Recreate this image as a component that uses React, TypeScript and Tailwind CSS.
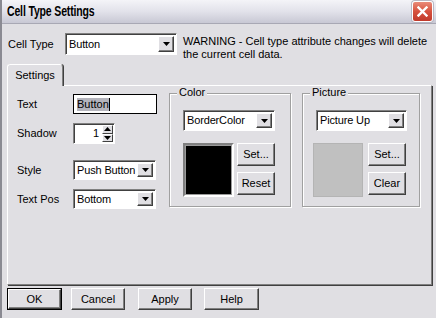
import React from 'react';

function Arrow({ up = false }: { up?: boolean }) {
  return (
    <svg width="7" height="4" viewBox="0 0 7 4" className="block">
      <polygon points={up ? '0,4 7,4 3.5,0' : '0,0 7,0 3.5,4'} fill="#000" />
    </svg>
  );
}

function DropBtn() {
  return (
    <div className="w-[16px] self-stretch flex items-center justify-center bg-[#e0dfe3] border border-t-white border-l-white border-b-[#404040] border-r-[#404040] shadow-[inset_-1px_-1px_0_#808080]">
      <Arrow />
    </div>
  );
}

function Combo({ value, className }: { value: string; className: string }) {
  return (
    <div className={`flex bg-white p-[2px] border border-t-[#808080] border-l-[#808080] border-b-white border-r-white shadow-[inset_1px_1px_0_#404040] ${className}`}>
      <span className="flex-1 pl-[1px] flex items-center whitespace-nowrap overflow-hidden tracking-[-0.15px]">{value}</span>
      <DropBtn />
    </div>
  );
}

function Btn({ label, className, def = false }: { label: string; className: string; def?: boolean }) {
  return (
    <div className={`${def ? 'border border-black' : ''} ${className}`}>
      <div className="w-full h-full flex items-center justify-center bg-[#e0dfe3] border border-t-white border-l-white border-b-[#404040] border-r-[#404040] shadow-[inset_-1px_-1px_0_#808080]">
        {label}
      </div>
    </div>
  );
}

function CloseBtn() {
  return (
    <div className="w-[21px] h-[21px] rounded-[3px] border border-white bg-gradient-to-b from-[#e98a78] via-[#d6513e] to-[#c0392b] flex items-center justify-center shadow-[0_0_0_1px_#b8b8c4]">
      <svg width="11" height="11" viewBox="0 0 11 11">
        <path d="M1.5 1.5 L9.5 9.5 M9.5 1.5 L1.5 9.5" stroke="#fff" strokeWidth="2.4" strokeLinecap="square" />
      </svg>
    </div>
  );
}

function Group({ title, className, children }: { title: string; className: string; children: React.ReactNode }) {
  return (
    <div className={`relative border border-[#a0a0a0] shadow-[1px_1px_0_#fff,inset_1px_1px_0_#fff] ${className}`}>
      <span className="absolute left-[7px] -top-[8px] px-[2px] bg-[#e0dfe3] leading-[13px]">{title}</span>
      {children}
    </div>
  );
}

export default function App() {
  return (
    <div className="w-[436px] h-[318px] overflow-hidden bg-[#e0dfe3] text-[11px] leading-[13px] text-black font-['Liberation_Sans',Arial,sans-serif] flex flex-col border-l-2 border-[#8a8a92]">
      {/* title bar */}
      <div className="h-[24px] shrink-0 flex items-center justify-between bg-gradient-to-b from-[#f4f4f8] via-[#e2e2ea] to-[#c8c8d4] border-b border-[#a8a8b4] pl-[5px] pr-[3px]">
        <span className="inline-block origin-left scale-x-[0.75] font-bold text-[14px] tracking-[-0.2px] whitespace-nowrap">Cell Type Settings</span>
        <CloseBtn />
      </div>

      {/* cell type row */}
      <div className="h-[40px] shrink-0 flex items-start pl-[6px] pt-[9px]">
        <span className="w-[57px] pt-[5px]">Cell Type</span>
        <Combo value="Button" className="w-[112px] h-[22px]" />
        <p className="ml-[6px] pt-[2px] w-[250px]">
          WARNING - Cell type attribute changes will delete the current cell data.
        </p>
      </div>

      {/* tab */}
      <div className="pl-[5px] shrink-0 flex">
        <div className="relative z-10 -mb-px w-[56px] h-[22px] flex items-center justify-center bg-[#e0dfe3] border border-b-0 border-t-white border-l-white border-r-[#808080] rounded-t-[3px] shadow-[1px_0_0_#404040]">
          Settings
        </div>
      </div>

      {/* tab panel */}
      <div className="ml-[5px] w-[425px] h-[200px] shrink-0 flex pt-[8px] pl-[9px] border border-t-white border-l-white border-r-[#808080] border-b-[#808080] shadow-[1px_1px_0_#404040]">
        {/* left fields */}
        <div className="w-[140px] flex flex-col">
          <div className="flex items-center h-[20px]">
            <span className="w-[56px]">Text</span>
            <div className="w-[84px] h-[20px] bg-white border border-black flex items-center pl-[3px]">
              <span className="bg-[#b4b4bc]">Button</span>
              <span className="w-px h-[13px] bg-black" />
            </div>
          </div>
          <div className="flex items-center h-[21px] mt-[9px]">
            <span className="w-[56px]">Shadow</span>
            <div className="w-[42px] h-[21px] flex bg-white border border-t-[#808080] border-l-[#808080] border-b-white border-r-white shadow-[inset_1px_1px_0_#404040]">
              <span className="flex-1 flex items-center justify-end pr-[3px]">1</span>
              <div className="w-[12px] flex flex-col py-[1px] pr-[1px]">
                <div className="flex-1 flex items-center justify-center bg-[#e0dfe3] border border-t-white border-l-white border-b-[#404040] border-r-[#404040]">
                  <Arrow up />
                </div>
                <div className="flex-1 flex items-center justify-center bg-[#e0dfe3] border border-t-white border-l-white border-b-[#404040] border-r-[#404040]">
                  <Arrow />
                </div>
              </div>
            </div>
          </div>
          <div className="flex items-center h-[20px] mt-[16px]">
            <span className="w-[56px]">Style</span>
            <Combo value="Push Button" className="w-[83px] h-[20px]" />
          </div>
          <div className="flex items-center h-[20px] mt-[9px]">
            <span className="w-[56px]">Text Pos</span>
            <Combo value="Bottom" className="w-[83px] h-[20px]" />
          </div>
        </div>

        {/* color group */}
        <Group title="Color" className="ml-[12px] -mt-[1px] w-[122px] h-[114px] pl-[13px] pt-[16px]">
          <Combo value="BorderColor" className="w-[92px] h-[21px]" />
          <div className="flex mt-[12px]">
            <div className="w-[51px] h-[54px] border-2 border-t-[#808080] border-l-[#808080] border-b-white border-r-white">
              <div className="w-full h-full bg-black border border-[#9a9a9a]" />
            </div>
            <div className="ml-[3px] flex flex-col gap-[6px]">
              <Btn label="Set..." className="w-[38px] h-[23px]" />
              <Btn label="Reset" className="w-[38px] h-[23px]" />
            </div>
          </div>
        </Group>

        {/* picture group */}
        <Group title="Picture" className="ml-[11px] -mt-[1px] w-[118px] h-[114px] pl-[10px] pt-[16px]">
          <div className="pl-[3px]">
            <Combo value="Picture Up" className="w-[91px] h-[21px]" />
          </div>
          <div className="flex mt-[12px]">
            <div className="w-[50px] h-[54px] bg-[#c0c0c0] border border-[#b4b4b4]" />
            <div className="ml-[5px] flex flex-col gap-[6px]">
              <Btn label="Set..." className="w-[38px] h-[23px]" />
              <Btn label="Clear" className="w-[38px] h-[23px]" />
            </div>
          </div>
        </Group>
      </div>

      {/* bottom buttons */}
      <div className="flex pl-[5px] mt-[3px]">
        <Btn label="OK" def className="w-[55px] h-[22px]" />
        <Btn label="Cancel" className="ml-[9px] w-[54px] h-[22px]" />
        <Btn label="Apply" className="ml-[13px] w-[54px] h-[22px]" />
        <Btn label="Help" className="ml-[12px] w-[55px] h-[22px]" />
      </div>
    </div>
  );
}
